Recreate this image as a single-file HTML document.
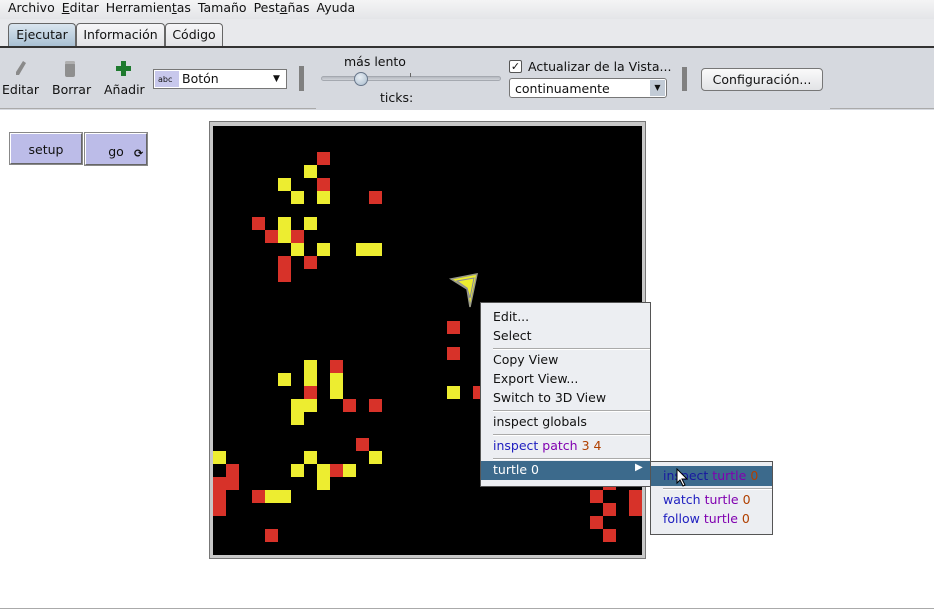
<!DOCTYPE html>
<html><head><meta charset="utf-8"><style>
*{margin:0;padding:0;box-sizing:border-box}
body{width:934px;height:611px;background:#fff;font-family:"DejaVu Sans","Liberation Sans",sans-serif;font-size:12.5px;color:#111;position:relative;overflow:hidden}
.a{position:absolute;white-space:nowrap}
.menu span{margin-right:7px}
.tab{position:absolute;top:23px;height:23px;border:1px solid #666;border-bottom:none;border-radius:4px 4px 0 0;background:linear-gradient(#f6f6f8,#e2e3e6);padding:3px 0 0;text-align:center;font-size:12.5px}
.pm{background:#eceef2;border:1px solid #555}
.pm div{position:absolute;left:12px;font-size:12.5px}
.sep{position:absolute;left:0;right:0;height:2px;border-top:1px solid #aaa;background:#fff}
</style></head><body>
<div class="a" style="left:0;top:0;width:934px;height:19px;background:linear-gradient(#f4f4f5,#e4e5e8)"></div>
<div class="a menu" style="left:8px;top:0;font-size:12.5px"><span>Archivo</span><span><u>E</u>ditar</span><span>Herramien<u>t</u>as</span><span>Tamaño</span><span>Pest<u>a</u>ñas</span><span>Ayuda</span></div>
<div class="a" style="left:0;top:19px;width:934px;height:28px;background:#e8e9ec"></div>
<div class="tab" style="left:8px;width:68px;background:linear-gradient(#d9e5ef,#a9c0d3)">Ejecutar</div>
<div class="tab" style="left:76px;width:89px">Información</div>
<div class="tab" style="left:165px;width:58px">Código</div>
<div class="a" style="left:0;top:46px;width:934px;height:2px;background:#333"></div>
<div class="a" style="left:0;top:48px;width:934px;height:62px;background:#d6d9df"></div>
<div class="a" style="left:0;top:108px;width:316px;height:1px;background:#aaa"></div>
<div class="a" style="left:830px;top:108px;width:104px;height:1px;background:#aaa"></div>
<svg class="a" style="left:14px;top:60px" width="14" height="18"><path d="M9 1 L12 3 L5 15 L2 15 L2 12 Z" fill="#8a8a8a"/></svg>
<svg class="a" style="left:63px;top:60px" width="14" height="18"><rect x="2" y="3" width="10" height="14" rx="2" fill="#8f8f8f"/><rect x="2" y="1" width="10" height="3" rx="1.5" fill="#b0b0b0"/></svg>
<svg class="a" style="left:116px;top:61px" width="15" height="15"><path d="M5 0h5v5h5v5h-5v5h-5v-5h-5v-5h5z" fill="#1e7a2e"/></svg>
<div class="a" style="left:2px;top:82px;font-size:12.5px">Editar</div>
<div class="a" style="left:52px;top:82px;font-size:12.5px">Borrar</div>
<div class="a" style="left:104px;top:82px;font-size:12.5px">Añadir</div>
<div class="a" style="left:153px;top:69px;width:134px;height:20px;border:1px solid #777;background:#fff"></div>
<div class="a" style="left:155px;top:71px;width:24px;height:16px;background:#c8c8ec;font-size:8px;padding:4px 0 0 3px">abc</div>
<div class="a" style="left:182px;top:71px;font-size:12.5px">Botón</div>
<div class="a" style="left:273px;top:74px;font-size:9px">▼</div>
<div class="a" style="left:299px;top:66px;width:5px;height:25px;background:#808080"></div>
<div class="a" style="left:344px;top:54px;font-size:12.5px">más lento</div>
<div class="a" style="left:321px;top:76px;width:180px;height:5px;border-radius:3px;background:linear-gradient(#b5b9c0,#cfd2d8);border:1px solid #a5a9b0"></div>
<div class="a" style="left:410px;top:73px;width:1px;height:4px;background:#666"></div>
<div class="a" style="left:354px;top:72px;width:14px;height:14px;border-radius:50%;background:radial-gradient(circle at 40% 35%,#e8eef4,#a9bccd);border:1px solid #68768a"></div>
<div class="a" style="left:380px;top:90px;font-size:12.5px">ticks:</div>
<div class="a" style="left:509px;top:60px;width:13px;height:13px;border:1px solid #555;background:#fff;font-size:11px;line-height:11px;text-align:center;border-radius:2px;font-weight:bold">✓</div>
<div class="a" style="left:528px;top:59px;font-size:12.5px">Actualizar de la Vista...</div>
<div class="a" style="left:509px;top:78px;width:158px;height:20px;border:1px solid #777;border-radius:3px;background:#fff;padding:2px 0 0 5px;font-size:12.5px">continuamente</div>
<div class="a" style="left:650px;top:80px;width:15px;height:16px;background:#c2cbd6;font-size:8px;text-align:center;padding-top:3px">▼</div>
<div class="a" style="left:682px;top:67px;width:5px;height:24px;background:#808080"></div>
<div class="a" style="left:701px;top:68px;width:122px;height:23px;border:1px solid #777;border-radius:4px;background:linear-gradient(#fafafa,#e2e3e6);text-align:center;padding-top:3px;font-size:12.5px">Configuración...</div>
<div class="a" style="left:10px;top:133px;width:72px;height:31px;background:#bcbce8;border:1px solid;border-color:#fff #666 #666 #fff;outline:1px solid #888;text-align:center;padding-top:8px;font-size:12.5px">setup</div>
<div class="a" style="left:85px;top:133px;width:62px;height:32px;background:#bcbce8;border:1px solid;border-color:#fff #666 #666 #fff;outline:1px solid #888;text-align:center;padding-top:10px;font-size:12.5px">go</div>
<div class="a" style="left:134px;top:147px;font-size:11px;font-weight:bold">⟳</div>
<div class="a" style="left:209px;top:121px;width:437px;height:438px;background:#c8c8c8;border:1px solid #777"></div>
<svg class="a" style="left:213px;top:126px" width="429" height="429" viewBox="0 0 33 33" shape-rendering="crispEdges">
<rect width="33" height="33" fill="#000"/>
<g fill="#d73229">
<rect x="8" y="2" width="1" height="1"/><rect x="8" y="4" width="1" height="1"/><rect x="12" y="5" width="1" height="1"/><rect x="3" y="7" width="1" height="1"/><rect x="4" y="8" width="1" height="1"/><rect x="6" y="8" width="1" height="1"/><rect x="5" y="10" width="1" height="2"/><rect x="7" y="10" width="1" height="1"/><rect x="18" y="15" width="1" height="1"/><rect x="18" y="17" width="1" height="1"/><rect x="9" y="18" width="1" height="1"/><rect x="7" y="20" width="1" height="1"/><rect x="20" y="20" width="1" height="1"/><rect x="10" y="21" width="1" height="1"/><rect x="12" y="21" width="1" height="1"/><rect x="11" y="24" width="1" height="1"/><rect x="1" y="26" width="1" height="2"/><rect x="9" y="26" width="1" height="1"/><rect x="0" y="27" width="1" height="3"/><rect x="3" y="28" width="1" height="1"/><rect x="4" y="31" width="1" height="1"/><rect x="30" y="27" width="1" height="1"/><rect x="29" y="28" width="1" height="1"/><rect x="30" y="29" width="1" height="1"/><rect x="29" y="30" width="1" height="1"/><rect x="30" y="31" width="1" height="1"/><rect x="32" y="28" width="1" height="2"/>
</g>
<g fill="#eded30">
<rect x="7" y="3" width="1" height="1"/><rect x="5" y="4" width="1" height="1"/><rect x="6" y="5" width="1" height="1"/><rect x="8" y="5" width="1" height="1"/><rect x="5" y="7" width="1" height="2"/><rect x="7" y="7" width="1" height="1"/><rect x="6" y="9" width="1" height="1"/><rect x="8" y="9" width="1" height="1"/><rect x="11" y="9" width="2" height="1"/><rect x="7" y="18" width="1" height="2"/><rect x="9" y="19" width="1" height="2"/><rect x="5" y="19" width="1" height="1"/><rect x="18" y="20" width="1" height="1"/><rect x="6" y="21" width="2" height="1"/><rect x="6" y="22" width="1" height="1"/><rect x="0" y="25" width="1" height="1"/><rect x="7" y="25" width="1" height="1"/><rect x="12" y="25" width="1" height="1"/><rect x="6" y="26" width="1" height="1"/><rect x="8" y="26" width="1" height="2"/><rect x="10" y="26" width="1" height="1"/><rect x="4" y="28" width="2" height="1"/>
</g>
</svg>
<svg class="a" style="left:448px;top:272px" width="34" height="38"><path d="M3 7 L29 2 L22 35 L19 17 Z" fill="#eded30" stroke="#9a9a88" stroke-width="1.5"/><path d="M9 9 L26 6 L22 26 L19 16 Z" fill="none" stroke="#8888a0" stroke-width="1"/></svg>
<div class="a pm" style="left:480px;top:302px;width:171px;height:185px">
<div style="top:6px">Edit...</div>
<div style="top:25px">Select</div>
<div class="sep" style="top:45px"></div>
<div style="top:49px">Copy View</div>
<div style="top:68px">Export View...</div>
<div style="top:87px">Switch to 3D View</div>
<div class="sep" style="top:107px"></div>
<div style="top:111px">inspect globals</div>
<div class="sep" style="top:131px"></div>
<div style="top:135px"><span style="color:#2020c0">inspect</span> <span style="color:#8000b0">patch</span> <span style="color:#b04000">3 4</span></div>
<div class="sep" style="top:155px"></div>
<div style="left:0;top:158px;width:169px;height:19px;background:#3c6a8c"></div>
<div style="top:159px;color:#fff">turtle 0</div>
<div style="left:154px;top:159px;color:#fff;font-size:10px">▶</div>
</div>
<div class="a pm" style="left:650px;top:461px;width:123px;height:74px">
<div style="left:0;top:4px;width:121px;height:20px;background:#3c6a8c"></div>
<div style="top:6px"><span style="color:#1818a0">inspect</span> <span style="color:#8000b0">turtle</span> <span style="color:#b04000">0</span></div>
<div class="sep" style="top:26px"></div>
<div style="top:30px"><span style="color:#2020c0">watch</span> <span style="color:#8000b0">turtle</span> <span style="color:#b04000">0</span></div>
<div style="top:49px"><span style="color:#2020c0">follow</span> <span style="color:#8000b0">turtle</span> <span style="color:#b04000">0</span></div>
</div>
<svg class="a" style="left:676px;top:468px" width="14" height="20"><path d="M1 1 L1 15 L4 12 L7 18 L9 17 L6 11 L11 11 Z" fill="#fff" stroke="#000"/></svg>
<div class="a" style="left:0;top:608px;width:934px;height:1px;background:#aaa"></div>
</body></html>
